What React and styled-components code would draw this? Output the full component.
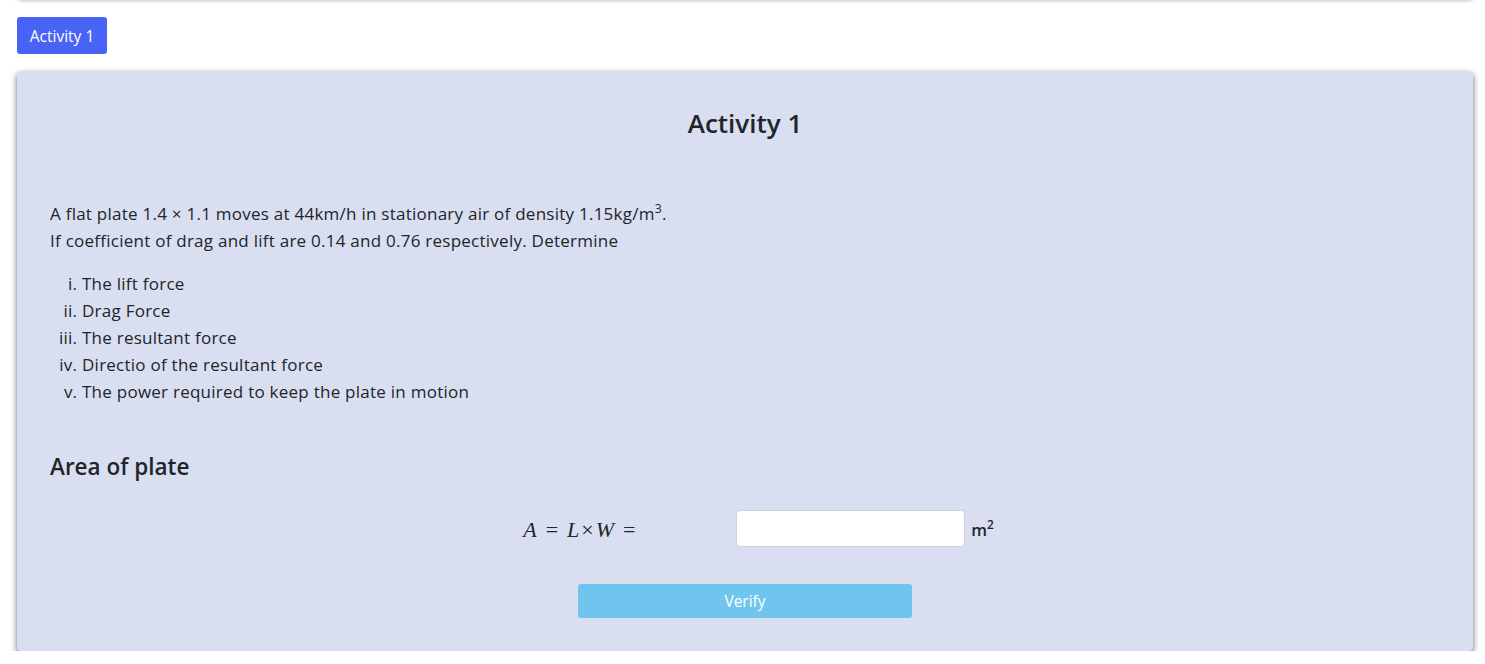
import React from "react";
import styled, { createGlobalStyle } from "styled-components";

const Global = createGlobalStyle`
  html, body { margin: 0; padding: 0; background: #ffffff; }
  body {
    font-family: "Open Sans", "Noto Sans", "Liberation Sans", sans-serif;
    color: #212529;
  }
  * { box-sizing: border-box; }
`;

const Page = styled.div`
  padding: 0 12px 0 17px;
  display: flex;
  flex-direction: column;
  align-items: flex-start;
`;

const TopBar = styled.div`
  align-self: stretch;
  height: 20px;
  margin-top: -21px;
  background: #ffffff;
  border-radius: 4px;
  box-shadow: 0 1px 4px rgba(0, 0, 0, 0.35);
`;

const TabButton = styled.button`
  margin-top: 18px;
  height: 37px;
  width: 90px;
  padding: 0;
  border: none;
  border-radius: 3px;
  background: #4a63f7;
  color: #ffffff;
  font-family: inherit;
  font-size: 15.5px;
  cursor: pointer;
`;

const Card = styled.section`
  align-self: stretch;
  margin-top: 17px;
  height: 580px;
  background: #d9dff0;
  border-radius: 4px;
  box-shadow: 0 3px 6px rgba(0, 0, 0, 0.6);
  padding: 36px 33px 0;
  display: flex;
  flex-direction: column;
`;

const Title = styled.h2`
  margin: 0;
  text-align: center;
  font-size: 26px;
  font-weight: 600;
  line-height: 32px;
`;

const Text = styled.p`
  margin: 61px 0 0;
  font-size: 17px;
  font-weight: 500;
  letter-spacing: 0.25px;
  line-height: 27px;
`;

const Sup = styled.sup`
  font-size: 0.72em;
  line-height: 0;
  vertical-align: 0.55em;
`;

const List = styled.ol`
  list-style: lower-roman;
  margin: 16px 0 0;
  padding-left: 32px;
  font-size: 17px;
  font-weight: 500;
  letter-spacing: 0.25px;
  line-height: 27px;
`;

const Heading = styled.h3`
  margin: 49px 0 0;
  font-size: 22.5px;
  font-weight: 600;
  line-height: 26px;
`;

const EquationRow = styled.div`
  margin-top: 30px;
  margin-left: 27px;
  display: flex;
  justify-content: center;
  align-items: center;
  height: 37px;
`;

const MathBlock = styled.div`
  width: 213px;
  color: #212529;
  padding-top: 3px;
  white-space: nowrap;
`;

const Var = styled.i`
  font-family: "Liberation Serif", serif;
  font-size: 22px;
`;

const Op = styled.span`
  font-family: "Liberation Serif", serif;
  font-size: 22px;
  margin: 0 ${(p) => (p.$tight ? "2px" : "9px")};
`;

const Input = styled.input`
  width: 229px;
  height: 37px;
  border: 1px solid #cfd4da;
  border-radius: 4px;
  background: #ffffff;
  font-size: 16px;
  padding: 6px 12px;
  outline: none;
`;

const Unit = styled.span`
  margin-left: 6px;
  font-size: 16.5px;
  font-weight: 600;
  padding-top: 2px;
`;

const VerifyButton = styled.button`
  align-self: center;
  margin-top: 37px;
  width: 334px;
  height: 34px;
  border: none;
  border-radius: 3px;
  background: #70c5ee;
  color: #ffffff;
  font-family: inherit;
  font-size: 15.5px;
`;

const items = [
  "The lift force",
  "Drag Force",
  "The resultant force",
  "Directio of the resultant force",
  "The power required to keep the plate in motion",
];

export default function App() {
  return (
    <>
      <Global />
      <Page>
        <TopBar />
        <TabButton>Activity 1</TabButton>
        <Card>
          <Title>Activity 1</Title>
          <Text>
            A flat plate 1.4 × 1.1 moves at 44km/h in stationary air of density 1.15kg/m
            <Sup>3</Sup>.
            <br />
            If coefficient of drag and lift are 0.14 and 0.76 respectively. Determine
          </Text>
          <List>
            {items.map((t) => (
              <li key={t}>{t}</li>
            ))}
          </List>
          <Heading>Area of plate</Heading>
          <EquationRow>
            <MathBlock>
              <Var>A</Var>
              <Op>=</Op>
              <Var>L</Var>
              <Op $tight>×</Op>
              <Var>W</Var>
              <Op>=</Op>
            </MathBlock>
            <Input type="text" />
            <Unit>
              m<Sup>2</Sup>
            </Unit>
          </EquationRow>
          <VerifyButton>Verify</VerifyButton>
        </Card>
      </Page>
    </>
  );
}
